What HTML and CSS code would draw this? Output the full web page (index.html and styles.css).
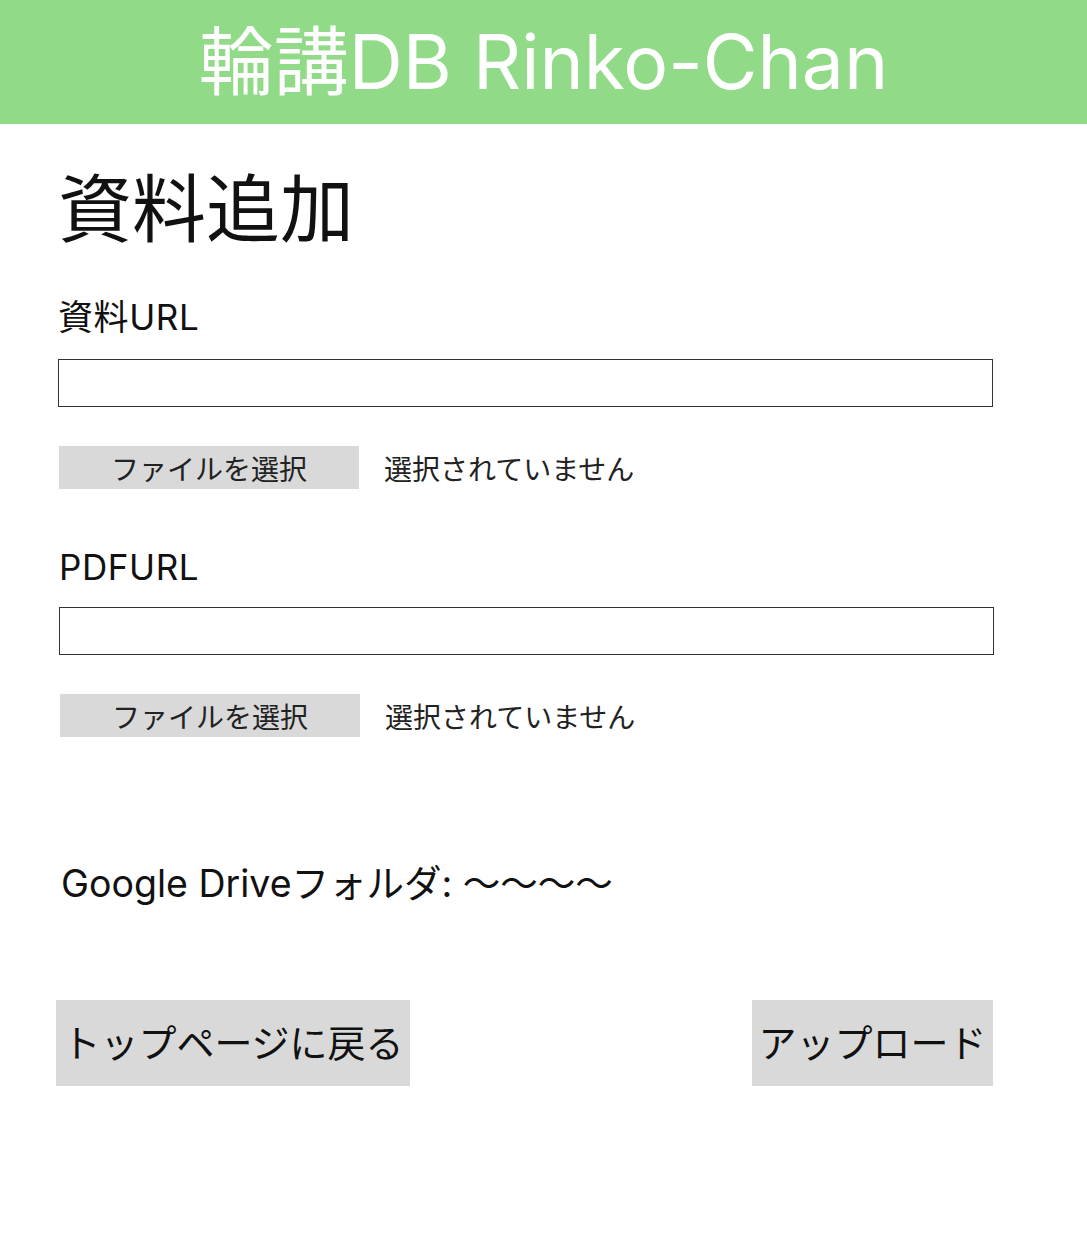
FILE: index.html
```html
<!DOCTYPE html>
<html lang="ja">
<head>
<meta charset="utf-8">
<title>輪講DB Rinko-Chan</title>
<link rel="stylesheet" href="styles.css">
</head>
<body>
<header class="top-bar">
  <div class="brand">輪講DB Rinko-Chan</div>
</header>
<main class="content">
  <h1 class="page-title">資料追加</h1>
  <section class="field field-doc">
    <label class="field-label">資料URL</label>
    <div class="text-input"></div>
    <div class="file-row">
      <span class="file-btn">ファイルを選択</span>
      <span class="file-status">選択されていません</span>
    </div>
  </section>
  <section class="field field-pdf">
    <label class="field-label">PDFURL</label>
    <div class="text-input"></div>
    <div class="file-row">
      <span class="file-btn">ファイルを選択</span>
      <span class="file-status">選択されていません</span>
    </div>
  </section>
  <p class="drive">Google Driveフォルダ: 〜〜〜〜</p>
  <div class="actions">
    <span class="action-btn back">トップページに戻る</span>
    <span class="action-btn upload">アップロード</span>
  </div>
</main>
</body>
</html>
```
FILE: styles.css
```css
* { box-sizing: border-box; }
html, body { margin: 0; padding: 0; background: #fff; }
body {
  font-family: "Inter", "Noto Sans CJK JP", sans-serif;
  color: #111;
}
.top-bar {
  height: 124px;
  background: #90da88;
  display: flex;
  align-items: center;
  justify-content: center;
}
.brand {
  color: #fff;
  font-size: 75px;
  line-height: 1;
  padding-bottom: 2px;
}
.content {
  padding: 42px 93px 0 58px;
}
.page-title {
  margin: 0;
  font-size: 74px;
  font-weight: 400;
  line-height: 86px;
}
.field { display: flex; flex-direction: column; }
.field-label {
  margin-top: 43px;
  font-size: 35px;
  line-height: 44px;
  letter-spacing: 0.6px;
}
.text-input {
  margin-top: 18px;
  height: 48px;
  width: 935px;
  border: 1px solid #333;
}
.field-doc .text-input { margin-top: 20px; }
.file-row {
  margin-top: 39px;
  display: flex;
  align-items: center;
  gap: 25px;
  margin-left: 1px;
}
.file-btn {
  width: 300px;
  height: 43px;
  background: #d9d9d9;
  display: flex;
  align-items: center;
  justify-content: center;
  font-size: 28px;
  color: #222;
}
.file-status {
  font-size: 28px;
  color: #222;
}
.field-pdf { margin-left: 1px; }
.field-pdf .field-label { margin-top: 56px; }
.drive {
  margin: 124px 0 0 3px;
  font-size: 37.5px;
  line-height: 46px;
}
.actions {
  margin-top: 93px;
  display: flex;
  justify-content: space-between;
  width: 937px;
  margin-left: -2px;
}
.action-btn {
  height: 86px;
  padding-bottom: 6px;
  background: #d9d9d9;
  display: flex;
  align-items: center;
  justify-content: center;
  font-size: 38px;
  color: #111;
}
.back { width: 354px; }
.upload { width: 241px; }
```
